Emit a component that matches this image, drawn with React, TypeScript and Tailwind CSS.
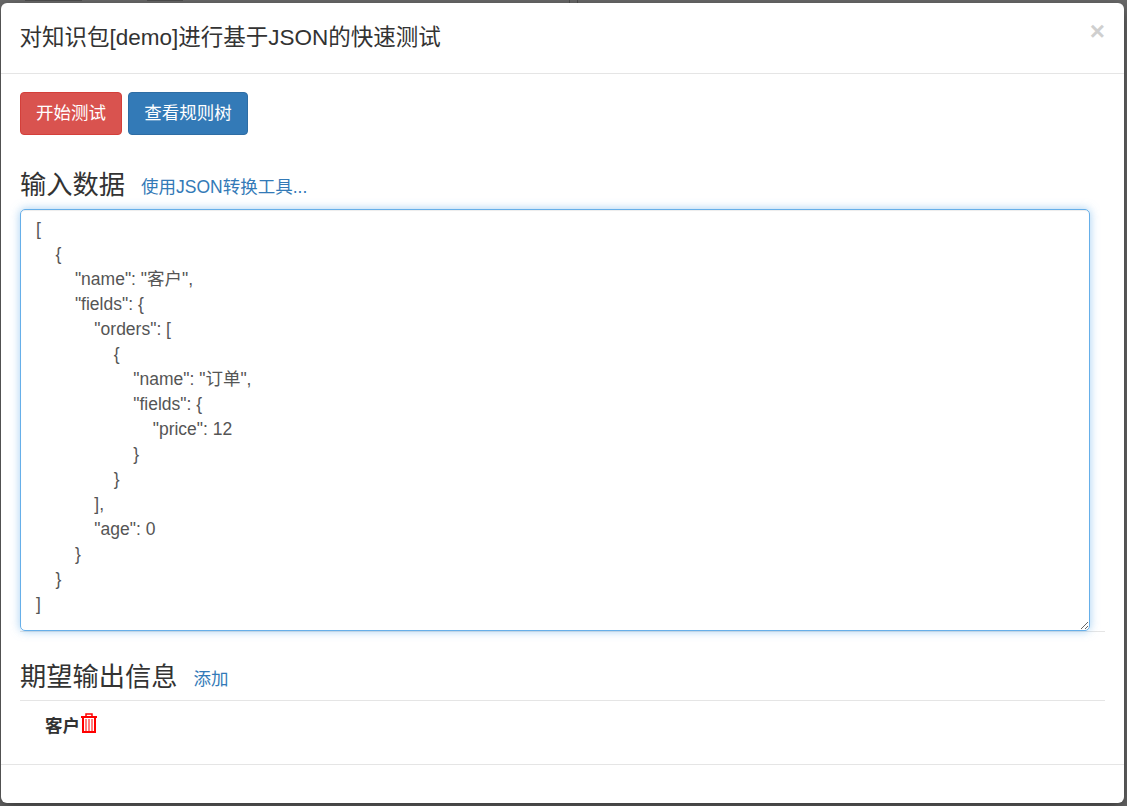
const json = `[
    {
        "name": "客户",
        "fields": {
            "orders": [
                {
                    "name": "订单",
                    "fields": {
                        "price": 12
                    }
                }
            ],
            "age": 0
        }
    }
]`;

const font = "font-['Liberation_Sans','Noto_Sans_CJK_SC',sans-serif]";

const TrashIcon = () => (
	<svg width="16" height="20" viewBox="0 0 16 20" className="text-[#ff0000]">
		<path d="M5 3V1h6V3" fill="none" stroke="currentColor" strokeWidth="1.5" />
		<rect x="0" y="3" width="16" height="2" fill="currentColor" />
		<path d="M2 5v14h12V5" fill="none" stroke="currentColor" strokeWidth="2" />
		<path d="M5 6v12M8 6v12M11 6v12" stroke="currentColor" strokeWidth="1" />
	</svg>
);

export default function App() {
	return (
		<div className={`relative h-[806px] w-[1127px] overflow-hidden bg-[#6b6b6b] pt-[3px] pl-[1px] ${font}`}>
			{/* bits of the page showing through the backdrop */}
			<span className="absolute top-0 left-[25px] h-[1px] w-[57px] bg-[#505050]"></span>
			<span className="absolute top-0 left-[147px] h-[1px] w-[36px] bg-[#505050]"></span>
			<span className="absolute top-0 left-[569px] h-[3px] w-[1px] bg-[#505050]"></span>
			<span className="absolute top-0 left-[577px] h-[3px] w-[1px] bg-[#505050]"></span>

			<div className="relative h-[800px] w-[1123px] rounded-[6px] bg-white text-[17.5px] leading-[25px] text-[#333] shadow-[0_5px_15px_rgba(0,0,0,0.5)]">
				{/* header */}
				<div className="relative h-[71px] border-b border-[#e5e5e5] pt-[19px] pl-[18.5px]">
					<h4 className="text-[22.5px] leading-[32px]">对知识包[demo]进行基于JSON的快速测试</h4>
					<span className="absolute top-[12px] right-[19px] text-[26px] leading-[32px] font-bold text-[#cfcfcf]">×</span>
				</div>

				<div className="pt-[18px] pl-[19px] pr-[19px]">
					{/* buttons */}
					<div className="flex gap-[6px]">
						<button className="h-[43px] w-[102px] rounded-[4px] border border-[#d43f3a] bg-[#d9534f] text-white">开始测试</button>
						<button className="h-[43px] w-[120px] rounded-[4px] border border-[#2e6da4] bg-[#337ab7] text-white">查看规则树</button>
					</div>

					{/* input */}
					<div className="mt-[35px] flex h-[31px] gap-[16px]">
						<h3 className="text-[26.25px] leading-[31px]">输入数据</h3>
						<a className="pt-[2px] leading-[31px] text-[#337ab7]">使用JSON转换工具...</a>
					</div>
					<div className="mt-[8px] border-b border-[#e5e5e5]">
						<textarea
							readOnly
							defaultValue={json}
							spellCheck={false}
							className="block h-[422px] w-[1070px] rounded-[5px] border border-[#66afe9] px-[15px] pt-[7px] pb-[8px] text-[17.5px] leading-[25px] text-[#555] shadow-[inset_0_1px_1px_rgba(0,0,0,0.075),0_0_10px_rgba(102,175,233,0.6)] outline-none"
						/>
					</div>

					{/* expected output */}
					<div className="mt-[30px] flex h-[31px] gap-[16px]">
						<h3 className="text-[26.25px] leading-[31px]">期望输出信息</h3>
						<a className="pt-[2px] leading-[31px] text-[#337ab7]">添加</a>
					</div>
					<div className="mt-[7px] flex h-[64px] items-start border-t border-[#e5e5e5] pl-[25px] pt-[12px]">
						<b className="mt-[1px] font-bold">客户</b>
						<span className="ml-[1px]"><TrashIcon /></span>
					</div>
				</div>

				{/* footer */}
				<div className="h-[39px] border-t border-[#e5e5e5]"></div>
			</div>
		</div>
	);
}
